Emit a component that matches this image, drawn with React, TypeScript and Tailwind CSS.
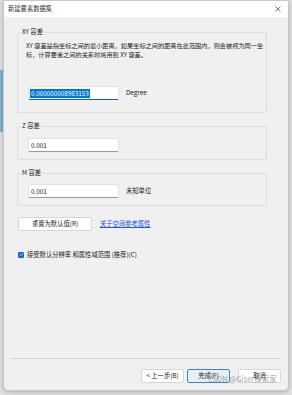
const FONT = { fontFamily: '"Noto Sans CJK SC", "Noto Sans", sans-serif' }

// ─── Text box ────────────────────────────────────────────────────────────────

function TextBox({ value, focused }: { value: string; focused?: boolean }) {
  return (
    <div
      className={`flex h-[14px] w-[91px] items-center rounded-[2px] border border-[#e3e3e3] bg-white pl-[1px] ${
        focused ? 'border-b-[#0067c0] border-b-[1.5px]' : 'border-b-[#9a9a9a]'
      }`}
    >
      {focused ? (
        <span className="bg-[#0078d7] px-[1px] text-[6.3px] leading-[9px] text-white">{value}</span>
      ) : (
        <span className="px-[1px] text-[6.3px] leading-[9px] text-[#222]">{value}</span>
      )}
    </div>
  )
}

// ─── Group box ───────────────────────────────────────────────────────────────

function Group({ title, children, className }: { title: string; children: React.ReactNode; className?: string }) {
  return (
    <fieldset className={`ml-[13px] w-[250px] rounded-[2px] border border-[#dcdcdc] ${className ?? ''}`}>
      <legend className="ml-[3px] px-[1px] text-[6.3px] leading-[8px] text-[#222]">{title}</legend>
      {children}
    </fieldset>
  )
}

// ─── Button ──────────────────────────────────────────────────────────────────

function Btn({ label, primary, className }: { label: string; primary?: boolean; className?: string }) {
  return (
    <div
      className={`flex h-[14px] items-center justify-center rounded-[2px] border text-[6.3px] text-[#222] ${
        primary ? 'border-[#3c84cf] bg-[#e6eef8]' : 'border-[#d6d6d6] bg-white'
      } ${className ?? ''}`}
    >
      {label}
    </div>
  )
}

export default function App() {
  return (
    <div className="relative h-[395px] w-[292px] overflow-hidden bg-[#e2e2e2]" style={FONT}>
      {/* window behind the dialog */}
      <div className="absolute left-0 top-[70px] h-[62px] w-[4px] bg-[#7fb6d2]" />

      <div className="relative ml-[3px] flex h-[391px] w-[286px] flex-col overflow-hidden rounded-b-[5px] border border-[#c9c9c9] bg-[#f0f0f0] shadow-[0_1px_4px_rgba(0,0,0,0.25)]">
        {/* Title bar */}
        <div className="flex h-[16px] shrink-0 items-center justify-between bg-white pl-[4px] pr-[7px]">
          <span className="text-[6.3px] text-[#333]">新建要素数据集</span>
          <svg width="6" height="6" viewBox="0 0 6 6" className="text-[#555]">
            <path d="M0.5 0.5 L5.5 5.5 M5.5 0.5 L0.5 5.5" stroke="currentColor" strokeWidth="0.8" />
          </svg>
        </div>

        {/* Body */}
        <div className="flex flex-1 flex-col pt-[11px]">
          <Group title="XY 容差" className="h-[85px]">
            <p className="ml-[8px] mt-[5px] whitespace-nowrap text-[6.2px] leading-[9px] text-[#222]">
              XY 容差是指坐标之间的最小距离，如果坐标之间的距离在此范围内，则会被视为同一坐
              <br />
              标，计算要素之间的关系时将用到 XY 容差。
            </p>
            <div className="ml-[10px] mt-[27px] flex items-center gap-[7px]">
              <TextBox value="0.000000008983153" focused />
              <span className="text-[6.3px] text-[#222]">Degree</span>
            </div>
          </Group>

          <Group title="Z 容差" className="mt-[9px] h-[38px]">
            <div className="ml-[10px] mt-[8px]">
              <TextBox value="0.001" />
            </div>
          </Group>

          <Group title="M 容差" className="mt-[9px] h-[37px]">
            <div className="ml-[10px] mt-[7px] flex items-center gap-[7px]">
              <TextBox value="0.001" />
              <span className="text-[6.3px] text-[#222]">未知单位</span>
            </div>
          </Group>

          <div className="ml-[14px] mt-[11px] flex items-center gap-[8px]">
            <Btn label="重置为默认值(R)" className="w-[74px]" />
            <span className="text-[6.3px] text-[#1a55e6] underline">关于空间参考属性</span>
          </div>

          <div className="ml-[14px] mt-[19px] flex items-center gap-[3px]">
            <div className="flex h-[6px] w-[6px] items-center justify-center rounded-[1px] bg-[#1f66c4]">
              <svg width="5" height="5" viewBox="0 0 5 5">
                <path d="M1 2.6 L2 3.6 L4 1.3" stroke="white" strokeWidth="0.7" fill="none" />
              </svg>
            </div>
            <span className="text-[6.3px] text-[#222]">接受默认分辨率 和属性域范围 (推荐)(C)</span>
          </div>

          <div className="flex-1" />

          {/* Footer */}
          <div className="mx-[7px] h-px bg-[#d4d4d4]" />
          <div className="mb-[7px] mt-[10px] flex justify-end gap-[3px] pr-[7px]">
            <Btn label="< 上一步(B)" className="w-[43px]" />
            <Btn label="完成(F)" primary className="w-[43px]" />
            <Btn label="取消" className="ml-[5px] w-[43px]" />
          </div>
        </div>

        {/* watermark */}
        <span className="absolute left-[204px] top-[372px] text-[7.5px] text-[#8a8a8a]/80">
          CSDN @Giser探索家
        </span>
      </div>
    </div>
  )
}
